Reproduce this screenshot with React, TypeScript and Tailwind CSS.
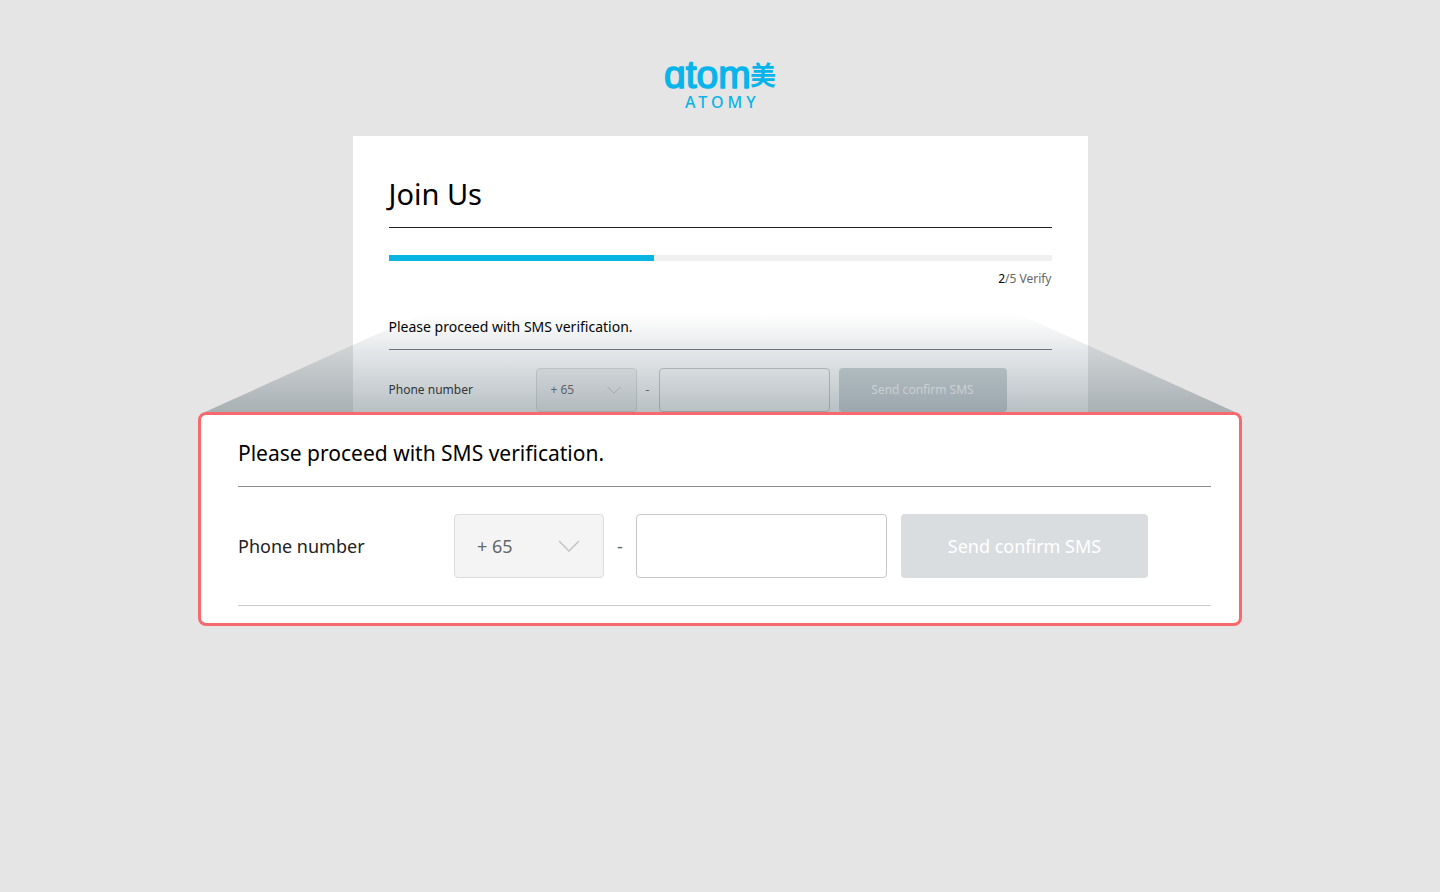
import { useId } from "react";
import clsx from "clsx";

interface Props {
  large?: boolean;
}

function Logo() {
  return (
    <svg
      role="img"
      aria-label="Atomy"
      viewBox="0 0 112 60"
      className="h-[60px] w-28 overflow-visible fill-[#08b4e9]"
    >
      <text
        x="0"
        y="34"
        strokeLinejoin="round"
        className="stroke-[#08b4e9] stroke-[1.5] font-['Liberation_Sans',sans-serif] text-[39px]"
      >
        ɑtom
      </text>
      <text
        x="86"
        y="31"
        className="font-['Noto_Sans_CJK_SC',sans-serif] text-[26px] font-bold"
      >
        美
      </text>
      <text
        x="21"
        y="54"
        className="font-['Noto_Sans',sans-serif] text-base font-medium tracking-[4px]"
      >
        ATOMY
      </text>
    </svg>
  );
}

function VerifyForm({ large }: Props) {
  const id = useId();

  return (
    <form onSubmit={(e) => e.preventDefault()}>
      <h2
        className={clsx(
          "border-b text-black",
          large
            ? "border-[#8b8e91] pb-[17px] text-[21px] leading-8"
            : "border-[#777777] pb-3 text-sm leading-5"
        )}
      >
        Please proceed with SMS verification.
      </h2>
      <div
        className={clsx(
          "flex items-center",
          large
            ? "border-b border-[#c9cacb] py-[27px] text-lg"
            : "pt-[18px] text-xs"
        )}
      >
        <label
          htmlFor={`${id}-phone`}
          className={clsx(
            "shrink-0 text-[#222222]",
            large ? "w-[216px]" : "w-[147px]"
          )}
        >
          Phone number
        </label>
        <div className={clsx("relative", large ? "w-[150px]" : "w-[101px]")}>
          <select
            aria-label="Country code"
            className={clsx(
              "w-full appearance-none rounded border border-[#dddddd] bg-[#f4f4f4] text-[#666666]",
              large ? "h-16 pl-[22px]" : "h-11 pl-3.5"
            )}
          >
            <option>+ 65</option>
          </select>
          <svg
            viewBox="0 0 22 12"
            className={clsx(
              "pointer-events-none absolute top-1/2 -translate-y-1/2 fill-none stroke-[#c4c4c4] stroke-[1.5]",
              large ? "right-6 h-3 w-[22px]" : "right-4 h-2 w-3.5"
            )}
          >
            <path d="M1 1l10 10L21 1" />
          </svg>
        </div>
        <span
          className={clsx(
            "text-center text-[#666666]",
            large ? "w-8" : "w-[22px]"
          )}
        >
          -
        </span>
        <input
          id={`${id}-phone`}
          type="tel"
          className={clsx(
            "min-w-0 rounded border border-[#c8c8c8] bg-white px-3",
            large ? "h-16 w-[251px]" : "h-11 w-[171px]"
          )}
        />
        <button
          type="submit"
          className={clsx(
            "rounded text-white",
            large
              ? "ml-3.5 h-16 w-[247px] bg-[#d9dde0]"
              : "ml-[9px] h-11 w-[168px] bg-[#cdd5d8]"
          )}
        >
          Send confirm SMS
        </button>
      </div>
    </form>
  );
}

export default function App() {
  return (
    <div className="flex min-h-screen flex-col items-center bg-[#e5e5e5] pt-[54px] font-['Noto_Sans',sans-serif]">
      <Logo />
      <main className="mt-[22px] w-full max-w-[735px] bg-white px-9 pt-[35px]">
        <h1 className="border-b border-[#222222] pb-[11px] text-[29px] leading-[45px] text-black">
          Join Us
        </h1>
        <div className="mt-[27px] h-[6px] bg-[#f0f0f0]">
          <div className="h-full w-2/5 bg-[#08b4e2]" />
        </div>
        <p className="mt-2 text-right text-xs leading-5 text-[#666666]">
          <span className="text-black">2</span>/5 Verify
        </p>
        <div className="mt-7">
          <VerifyForm />
        </div>
      </main>

      {/* Enlarged view of the form */}
      <section className="relative w-full max-w-[1044px] rounded-lg border-[3px] border-[#f8696e] bg-white pt-[22px] pr-7 pb-[17px] pl-[37px]">
        <div className="pointer-events-none absolute inset-x-1 bottom-[calc(100%+3px)] h-[98px] bg-linear-to-t from-[#4e626c]/40 to-[#4d4d4d]/0 [clip-path:polygon(0_100%,21%_0,79%_0,100%_100%)]" />
        <VerifyForm large />
      </section>
    </div>
  );
}
